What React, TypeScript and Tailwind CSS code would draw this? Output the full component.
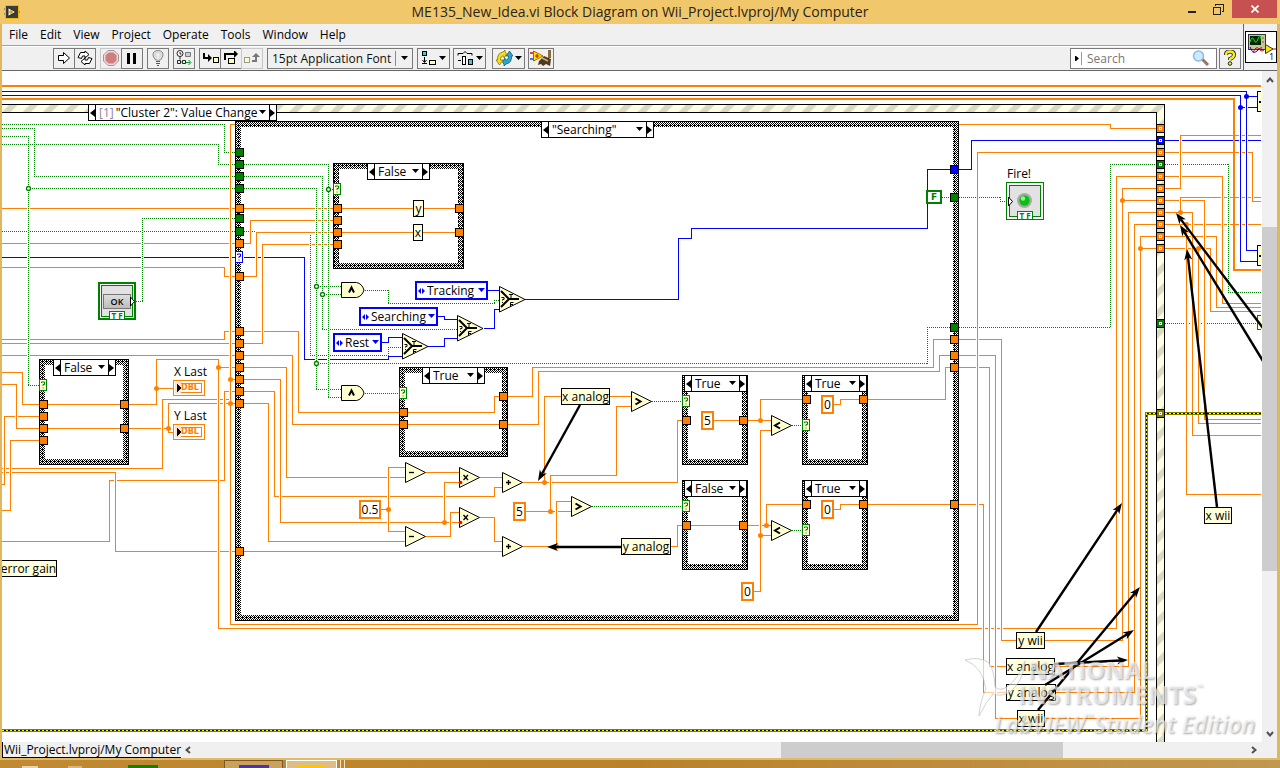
import React from "react";

const ORIGIN_X = 2;
const ORIGIN_Y = 71;
const at = (x: number, y: number) => ({ left: x - ORIGIN_X, top: y - ORIGIN_Y });
const box = (x: number, y: number, w: number, h: number) => ({ ...at(x, y), width: w, height: h });

const ORANGE = "#ff8000";
const GREEN = "#008000";
const BLUE = "#0000ff";
const CREAM = "#ffffd2";

/* Wires: colour key followed by the corner points of the path. */
type Kind = "o" | "g" | "b";
const WIRES: [Kind, number[]][] = [
  ["g", [2, 124, 224, 124, 224, 152, 236, 152]],
  ["g", [2, 128, 34, 128, 34, 176, 236, 176]],
  ["g", [2, 136, 28, 136, 28, 385, 39, 385]],
  ["g", [2, 144, 218, 144, 218, 164, 236, 164]],
  ["g", [28, 188, 236, 188]],
  ["o", [2, 208, 236, 208]],
  ["g", [134, 301, 142, 301, 142, 218, 236, 218]],
  ["g", [2, 231, 236, 231]],
  ["o", [2, 243, 236, 243]],
  ["b", [2, 257, 236, 257]],
  ["o", [2, 267, 224, 267, 224, 276, 236, 276]],
  ["o", [236, 124, 230, 124, 230, 624, 977, 624, 977, 152, 1157, 152]],
  ["o", [128, 404, 156, 404, 156, 359, 218, 359, 218, 628, 1116, 628, 1116, 176, 1157, 176]],
  ["o", [156, 388, 173, 388]],
  ["o", [218, 367, 236, 367]],
  ["o", [2, 339, 224, 339, 224, 331, 236, 331]],
  ["o", [2, 343, 236, 343]],
  ["o", [2, 355, 236, 355]],
  ["o", [230, 379, 236, 379]],
  ["o", [2, 541, 109, 541, 109, 480, 224, 480, 224, 391, 236, 391]],
  ["o", [236, 403, 168, 403, 168, 432, 173, 432]],
  ["o", [128, 428, 168, 428]],
  ["o", [2, 468, 162, 468, 162, 399, 230, 399]],
  ["o", [2, 472, 115, 472, 115, 551, 236, 551]],
  ["o", [2, 372, 22, 372, 22, 404, 40, 404]],
  ["o", [2, 384, 16, 384, 16, 428, 40, 428]],
  ["o", [2, 484, 4, 484, 4, 416, 40, 416]],
  ["o", [2, 510, 10, 510, 10, 440, 40, 440]],
  ["o", [46, 404, 122, 404]],
  ["o", [46, 428, 122, 428]],
  ["g", [244, 164, 328, 164, 328, 397, 341, 397]],
  ["g", [328, 189, 333, 189]],
  ["g", [244, 176, 322, 176, 322, 329, 457, 329]],
  ["g", [322, 294, 341, 294]],
  ["g", [244, 188, 316, 188, 316, 389, 341, 389]],
  ["g", [316, 286, 341, 286]],
  ["g", [316, 363, 927, 363, 927, 327, 949, 327]],
  ["g", [244, 231, 254, 231]],
  ["g", [310, 235, 310, 355, 388, 355, 388, 347, 402, 347]],
  ["o", [244, 208, 458, 208]],
  ["o", [244, 243, 250, 243, 250, 220, 333, 220]],
  ["o", [244, 276, 256, 276, 256, 232, 458, 232]],
  ["o", [333, 244, 262, 244, 262, 343, 244, 343]],
  ["o", [244, 331, 298, 331, 298, 412, 399, 412]],
  ["o", [244, 355, 292, 355, 292, 424, 399, 424]],
  ["o", [244, 367, 286, 367, 286, 477, 405, 477]],
  ["o", [244, 379, 280, 379, 280, 522, 459, 522]],
  ["o", [244, 391, 274, 391, 274, 496, 494, 496, 494, 487, 502, 487]],
  ["o", [244, 403, 268, 403, 268, 541, 405, 541]],
  ["o", [244, 551, 502, 551]],
  ["b", [244, 257, 304, 257, 304, 359, 388, 359, 388, 356, 402, 356]],
  ["g", [365, 290, 388, 290, 388, 303, 494, 303, 494, 300, 499, 300]],
  ["b", [488, 290, 499, 290]],
  ["b", [438, 316, 444, 316, 444, 319, 457, 319]],
  ["b", [382, 342, 388, 342, 388, 337, 402, 337]],
  ["b", [525, 299, 678, 299, 678, 238, 691, 238, 691, 228, 927, 228, 927, 169, 950, 169]],
  ["b", [484, 328, 494, 328, 494, 309, 499, 309]],
  ["b", [428, 346, 444, 346, 444, 338, 457, 338]],
  ["o", [408, 412, 494, 412, 494, 396, 499, 396]],
  ["o", [408, 424, 499, 424]],
  ["o", [508, 396, 532, 396, 532, 367, 933, 367, 933, 339, 949, 339]],
  ["o", [508, 424, 538, 424, 538, 371, 939, 371, 939, 355, 949, 355]],
  ["o", [867, 399, 945, 399, 945, 367, 949, 367]],
  ["g", [365, 393, 399, 393]],
  ["o", [426, 472, 459, 472]],
  ["o", [381, 509, 388, 509]],
  ["o", [405, 467, 388, 467, 388, 531, 405, 531]],
  ["o", [426, 536, 450, 536, 450, 512, 459, 512]],
  ["o", [480, 477, 502, 477]],
  ["o", [523, 482, 677, 482, 677, 420, 684, 420]],
  ["o", [444, 522, 444, 482, 459, 482]],
  ["o", [480, 517, 494, 517, 494, 541, 502, 541]],
  ["o", [523, 546, 556, 546, 556, 501, 571, 501]],
  ["o", [544, 482, 544, 396, 561, 396]],
  ["o", [610, 396, 631, 396]],
  ["o", [526, 511, 571, 511]],
  ["o", [550, 511, 550, 475, 616, 475, 616, 406, 631, 406]],
  ["g", [652, 401, 682, 401]],
  ["g", [592, 506, 682, 506]],
  ["o", [671, 546, 677, 546, 677, 525, 740, 525]],
  ["o", [714, 420, 740, 420]],
  ["o", [748, 420, 771, 420]],
  ["o", [760, 420, 760, 399, 804, 399]],
  ["o", [748, 525, 771, 525]],
  ["o", [766, 525, 766, 504, 804, 504]],
  ["o", [754, 591, 760, 591, 760, 430, 771, 430]],
  ["o", [760, 535, 771, 535]],
  ["g", [792, 425, 802, 425]],
  ["g", [792, 530, 802, 530]],
  ["o", [834, 404, 840, 404, 840, 399, 860, 399]],
  ["o", [834, 509, 840, 509, 840, 504, 950, 504]],
  ["o", [959, 124, 1110, 124, 1110, 128, 1157, 128]],
  ["b", [959, 169, 971, 169, 971, 140, 1260, 140]],
  ["g", [942, 197, 950, 197]],
  ["g", [959, 197, 1000, 197, 1000, 201, 1007, 201]],
  ["g", [959, 327, 1110, 327, 1110, 164, 1157, 164]],
  ["g", [1165, 164, 1228, 164, 1228, 292, 1260, 292]],
  ["o", [959, 339, 1001, 339, 1001, 640, 1122, 640, 1122, 188, 1157, 188]],
  ["o", [959, 355, 995, 355, 995, 718, 1140, 718, 1140, 236, 1157, 236]],
  ["o", [959, 367, 989, 367, 989, 666, 1128, 666, 1128, 212, 1157, 212]],
  ["o", [959, 504, 983, 504, 983, 692, 1134, 692, 1134, 224, 1157, 224]],
  ["o", [1122, 200, 1157, 200]],
  ["o", [1140, 248, 1157, 248]],
  ["o", [1165, 152, 1252, 152, 1252, 201, 1260, 201]],
  ["o", [1165, 176, 1222, 176, 1222, 303, 1260, 303]],
  ["o", [1165, 188, 1180, 188, 1180, 135, 1260, 135]],
  ["o", [1165, 200, 1204, 200, 1204, 419, 1260, 419]],
  ["o", [1165, 212, 1192, 212, 1192, 435, 1260, 435]],
  ["o", [1180, 212, 1180, 197, 1260, 197]],
  ["o", [1165, 224, 1260, 224]],
  ["o", [1186, 224, 1186, 494, 1260, 494]],
  ["o", [1165, 236, 1216, 236, 1216, 307, 1260, 307]],
  ["o", [1165, 248, 1210, 248, 1210, 311, 1260, 311]],
  ["o", [1198, 248, 1198, 423, 1260, 423]],
  ["g", [1165, 323, 1257, 323]],
  ["b", [2, 91, 1246, 91, 1246, 250, 1257, 250]],
  ["b", [2, 95, 1240, 95, 1240, 261, 1257, 261]],
  ["b", [1246, 96, 1257, 96]],
  ["b", [1240, 107, 1257, 107]],
];

const JOINTS: [Kind, number, number][] = [
  ["o", 218, 367], ["o", 230, 379], ["o", 230, 403], ["o", 156, 388], ["o", 168, 428],
  ["o", 388, 509], ["o", 444, 522], ["o", 544, 482], ["o", 550, 511], ["o", 556, 546],
  ["o", 760, 420], ["o", 766, 525], ["o", 760, 535], ["o", 1122, 200], ["o", 1140, 248],
  ["o", 1180, 212], ["o", 1186, 224], ["o", 1198, 248], ["b", 1246, 96], ["b", 1240, 107],
  ["g", 28, 188], ["g", 328, 189], ["g", 322, 294], ["g", 316, 286], ["g", 316, 363],
];

/* Case structures: x, y, width, height. */
const FRAMES = [
  [235, 121, 724, 500],
  [39, 359, 90, 106],
  [333, 163, 131, 106],
  [399, 367, 109, 90],
  [682, 375, 66, 90],
  [682, 480, 66, 90],
  [802, 375, 66, 90],
  [802, 480, 66, 90],
];

/* Tunnels: colour key, left edge, centre y. */
const TUNNELS: [Kind, number, number][] = [
  ["g", 235, 152], ["g", 235, 164], ["g", 235, 176], ["g", 235, 188], ["o", 235, 208],
  ["g", 235, 218], ["g", 235, 231], ["o", 235, 243], ["o", 235, 276], ["o", 235, 331],
  ["o", 235, 343], ["o", 235, 355], ["o", 235, 367], ["o", 235, 379], ["o", 235, 391],
  ["o", 235, 403], ["o", 235, 551],
  ["o", 39, 404], ["o", 39, 416], ["o", 39, 428], ["o", 39, 440], ["o", 120, 404], ["o", 120, 428],
  ["o", 333, 208], ["o", 333, 220], ["o", 333, 232], ["o", 333, 244], ["o", 455, 208], ["o", 455, 232],
  ["o", 399, 412], ["o", 399, 424], ["o", 499, 396], ["o", 499, 424],
  ["o", 682, 420], ["o", 739, 420], ["o", 682, 525], ["o", 739, 525],
  ["o", 802, 399], ["o", 859, 399], ["o", 802, 504], ["o", 859, 504],
  ["b", 950, 169], ["g", 950, 197], ["g", 950, 327], ["o", 950, 339], ["o", 950, 355],
  ["o", 950, 367], ["o", 950, 504],
];

const EVENT_TUNNELS: [string, number][] = [
  [ORANGE, 128], [BLUE, 140], [ORANGE, 152], [GREEN, 164], [ORANGE, 176], [ORANGE, 188],
  [ORANGE, 200], [ORANGE, 212], [ORANGE, 224], [ORANGE, 236], [ORANGE, 248], [GREEN, 323], ["#808000", 413],
];

const SELECTOR_TERMINALS = [
  [39, 379], [333, 183], [399, 387], [682, 395], [682, 500], [802, 419], [802, 524],
];

const FUNCTIONS: [string, number, number][] = [
  ["-", 405, 462], ["-", 405, 526], ["x", 459, 467], ["x", 459, 507], ["+", 502, 472],
  ["+", 502, 536], [">", 631, 391], [">", 571, 496], ["<", 771, 415], ["<", 771, 520],
];

const GLYPHS: Record<string, string> = {
  "-": "M4 10.500h5",
  "+": "M4 10.500h5M6.500 8v5",
  x: "M4.500 8l4.500 5M9 8l-4.500 5",
  ">": "M4.500 7.500l5 3l-5 3",
  "<": "M9 7.500l-5 3l5 3",
};

const ARROWS = [
  [580, 405, 538, 481],
  [621, 547, 547, 547],
  [1036, 632, 1122, 503],
  [1038, 710, 1140, 587],
  [1045, 685, 1134, 630],
  [1055, 664, 1128, 660],
  [1217, 507, 1187, 249],
  [1263, 328, 1176, 213],
  [1263, 361, 1180, 225],
];

const colour = (k: Kind) => (k === "o" ? ORANGE : k === "g" ? GREEN : BLUE);

function segments(vertical: boolean) {
  const out: { k: Kind; x: number; y: number; len: number }[] = [];
  for (const [k, p] of WIRES) {
    for (let i = 0; i + 3 < p.length; i += 2) {
      const [x1, y1, x2, y2] = p.slice(i, i + 4);
      const isVertical = x1 === x2;
      if (isVertical !== vertical) continue;
      out.push({ k, x: Math.min(x1, x2), y: Math.min(y1, y2), len: Math.abs(isVertical ? y2 - y1 : x2 - x1) + 1 });
    }
  }
  return out;
}

function Wires() {
  return (
    <g shapeRendering="crispEdges">
      {segments(false).map((s, i) => (
        <line key={i} x1={s.x} x2={s.x + s.len} y1={s.y + 0.5} y2={s.y + 0.5} stroke={colour(s.k)} strokeDasharray={s.k === "g" ? "1 1" : undefined} />
      ))}
      {segments(true).map((s, i) => (
        <g key={i}>
          {s.len > 6 && <rect x={s.x - 1} y={s.y + 2} width={3} height={s.len - 4} fill="#fff" />}
          <line x1={s.x + 0.5} x2={s.x + 0.5} y1={s.y} y2={s.y + s.len} stroke={colour(s.k)} strokeDasharray={s.k === "g" ? "1 1" : undefined} />
        </g>
      ))}
    </g>
  );
}

function Diagram() {
  return (
    <svg className="absolute left-0 top-0" width={1260} height={671} viewBox="2 71 1260 671" aria-hidden="true">
      <defs>
        <pattern id="hatch" width="4" height="4" patternUnits="userSpaceOnUse">
          <rect width="4" height="4" fill="#fff" />
          <path d="M0 0h1v1h-1zM2 0h1v1h-1zM1 1h3v1h-3zM0 2h1v1h-1zM2 2h1v1h-1zM1 3h1v1h-1zM3 3h1v1h-1z" fill="#000" />
        </pattern>
        <pattern id="stripe" x="15.800" width="20.500" height="20.500" patternUnits="userSpaceOnUse">
          <rect width="20.500" height="20.500" fill="#ffffe3" />
          <path d="M-5 25.500L25.500 -5M-5 5L5 -5M15.500 25.500L25.500 15.500" stroke="#dadac4" strokeWidth="6" />
        </pattern>
      </defs>

      <Wires />

      <g fill="none" stroke={ORANGE} strokeWidth="2" shapeRendering="crispEdges">
        <path d="M2 86H1261" />
        <path d="M2 99H1234V270H1261" />
      </g>

      <g fill="none" shapeRendering="crispEdges">
        <path d="M1261 413.500H1146.500V730.500H2" stroke="#808000" strokeWidth="3" />
        <path d="M1261 413.500H1146.500V730.500H2" stroke="#ffff00" />
        <path d="M1261 413.500H1146.500V730.500H2" stroke="#000" strokeDasharray="2 2" />
      </g>

      <path d="M0 104.500H1164.500V745H1156.500V112.500H0Z" fill="url(#stripe)" stroke="#000" shapeRendering="crispEdges" />

      {FRAMES.map(([x, y, w, h], i) => (
        <g key={i} shapeRendering="crispEdges">
          <path fillRule="evenodd" fill="url(#hatch)" d={`M${x} ${y}h${w}v${h}h${-w}zM${x + 6} ${y + 6}v${h - 12}h${w - 12}v${-(h - 12)}z`} />
          <rect x={x + 0.5} y={y + 0.5} width={w - 1} height={h - 1} fill="none" stroke="#000" />
        </g>
      ))}

      {TUNNELS.map(([k, x, y], i) => (
        <rect key={i} x={x + 0.5} y={y - 3.5} width={8} height={8} fill={colour(k)} stroke="#000" shapeRendering="crispEdges" />
      ))}
      {EVENT_TUNNELS.map(([c, y], i) => (
        <g key={i} shapeRendering="crispEdges">
          <rect x={1156.5} y={y - 3.5} width={8} height={8} fill={c} stroke="#000" />
          <rect x={1159} y={y - 1} width={3} height={3} fill="#fff" />
          <rect x={1160} y={y} width={1} height={1} fill={c} />
        </g>
      ))}

      {JOINTS.map(([k, x, y], i) =>
        k === "g" ? (
          <circle key={i} cx={x + 0.5} cy={y + 0.5} r={2} fill="#fff" stroke={GREEN} strokeWidth="1.300" />
        ) : (
          <circle key={i} cx={x + 0.5} cy={y + 0.5} r={2.5} fill={colour(k)} />
        )
      )}

      {SELECTOR_TERMINALS.map(([x, y], i) => (
        <g key={i} transform={`translate(${x} ${y})`}>
          <rect x=".5" y=".5" width="7" height="11" fill={CREAM} stroke={GREEN} />
          <path d="M2.500 4V3h3v2.500h-1.500v1.500M4 8.500v1" fill="none" stroke={GREEN} />
        </g>
      ))}
      <g transform="translate(235 251)">
        <rect x=".5" y=".5" width="7" height="11" fill="#fff" stroke={BLUE} />
        <path d="M2.500 4V3h3v2.500h-1.500v1.500M4 8.500v1" fill="none" stroke={BLUE} />
      </g>

      {FUNCTIONS.map(([op, x, y], i) => (
        <g key={i} transform={`translate(${x} ${y})`}>
          <path d="M.5 .5L20.500 10.500L.5 20.500Z" fill={CREAM} stroke="#000" />
          <path d={GLYPHS[op]} fill="none" stroke="#000" strokeWidth={op === ">" || op === "<" ? 2 : 1.3} />
          {op === "x" && <circle cx="1.500" cy="15.500" r="1.800" fill="#ff0000" />}
        </g>
      ))}

      {[[341, 282], [341, 385]].map(([x, y], i) => (
        <g key={i} transform={`translate(${x} ${y})`}>
          <path d="M.5 .5H15.500Q21 1.500 23 8Q21 14.500 15.500 15.500H.5Z" fill={CREAM} stroke="#000" />
          <path d="M8 10.500L10.500 5.500L13 10.500" fill="none" stroke="#000" strokeWidth="2" />
        </g>
      ))}

      {[[499, 286], [457, 315], [402, 333]].map(([x, y], i) => (
        <g key={i} transform={`translate(${x} ${y})`}>
          <path d="M.5 .5L26 13.500L.5 26Z" fill={CREAM} stroke="#000" />
          <path d="M2 5L10 13M2 21L10 13M10 13H20" fill="none" stroke="#000" strokeWidth="2" />
          <path d="M2.500 11.500h2.500v2h-1.500v1M3.500 16v1M10 8.500h4M12 8.500v4M11.500 21v-4.500h3M11.500 18.500h2.500" fill="none" stroke="#000" />
        </g>
      ))}

      {[[173, 380], [173, 424]].map(([x, y], i) => (
        <g key={i} transform={`translate(${x} ${y})`} shapeRendering="crispEdges">
          <rect x=".5" y=".5" width="31" height="15" fill="#fff" stroke={ORANGE} />
          <rect x="3.500" y="3.500" width="25" height="9" fill="#fff" stroke={ORANGE} />
          <rect x="2" y="2" width="6" height="12" fill="#ffe4cc" />
          <path d="M4 4v8l4-4z" fill="#000" />
        </g>
      ))}

      <g shapeRendering="crispEdges">
        <rect x="1257.500" y="91.500" width="6" height="20" fill={CREAM} stroke="#000" />
        <rect x="1259" y="101" width="2" height="2" fill="#000" />
        <rect x="1257.500" y="245.500" width="6" height="20" fill={CREAM} stroke="#000" />
        <rect x="1259" y="255" width="2" height="2" fill="#000" />
        <rect x="1257.500" y="315.500" width="6" height="14" fill={CREAM} stroke={GREEN} />
      </g>

      <g transform="translate(1006 182)">
        <rect x=".5" y=".5" width="37" height="37" fill="#fff" stroke={GREEN} />
        <rect x="3.500" y="3.500" width="31" height="31" fill="#e2e2e2" stroke={GREEN} />
        <circle cx="18.500" cy="18.500" r="7.500" fill="#a9a9a9" />
        <circle cx="18.500" cy="18.500" r="5.200" fill="#0bbf12" />
        <circle cx="17" cy="16.500" r="2.200" fill="#8df58c" />
        <path d="M2.500 15l4 4.500l-4 4.500z" fill="#fff" stroke="#000" />
      </g>
      <path d="M1261.500 71V742" stroke="#fff" />
    </svg>
  );
}

function CaseSelector({ x, y, w, value, index, label }: { x: number; y: number; w: number; value: string; index?: string; label: string }) {
  return (
    <div className="absolute flex h-[17px] items-stretch border border-black bg-white" style={{ ...at(x, y), width: w }}>
      <button aria-label={`Previous case of ${label}`} className="flex w-[7px] shrink-0 items-center justify-center border-r border-black">
        <svg width="6" height="8" viewBox="0 0 6 8" className="shrink-0"><path d="M6 0v8L1 4z" /></svg>
      </button>
      <div className="relative flex min-w-0 flex-1 items-center pl-[3px]">
        {index && <span className="pr-[2px] text-[#8c8494]">{index}</span>}
        <select aria-label={label} defaultValue={value} className="h-[15px] min-w-0 flex-1 appearance-none bg-transparent p-0 leading-[15px] text-black outline-none">
          <option>{value}</option>
        </select>
        <svg className="pointer-events-none absolute right-[3px] top-[5px]" width="7" height="4" viewBox="0 0 7 4"><path d="M0 0h7L3.500 4z" /></svg>
      </div>
      <button aria-label={`Next case of ${label}`} className="flex w-[7px] shrink-0 items-center justify-center border-l border-black">
        <svg width="6" height="8" viewBox="0 0 6 8" className="shrink-0"><path d="M0 0v8L5 4z" /></svg>
      </button>
    </div>
  );
}

function EnumConstant({ x, y, w, value }: { x: number; y: number; w: number; value: string }) {
  return (
    <div className="absolute flex h-[19px] items-center gap-[2px] border-2 border-[#0000ff] bg-white pl-px" style={{ ...at(x, y), width: w }}>
      <svg className="shrink-0" width="7" height="6" viewBox="0 0 7 6" fill="#0000ff"><path d="M3 0v6L0 3zM4 0v6L7 3z" /></svg>
      <select aria-label={`${value} state`} defaultValue={value} className="h-[15px] min-w-0 flex-1 appearance-none bg-transparent p-0 leading-[15px] text-black outline-none">
        <option>{value}</option>
      </select>
      <svg className="pointer-events-none absolute right-px top-[5px]" width="7" height="4" viewBox="0 0 7 4" fill="#0000ff"><path d="M0 0h7L3.500 4z" /></svg>
    </div>
  );
}

function NumberConstant({ x, y, w, value }: { x: number; y: number; w: number; value: string }) {
  return (
    <input
      aria-label={`Constant ${value}`}
      defaultValue={value}
      className="absolute h-[19px] border-2 border-[#ff8000] bg-white p-0 text-center leading-[15px] text-black outline-none"
      style={{ ...at(x, y), width: w }}
    />
  );
}

function Note({ x, y, w, text }: { x: number; y: number; w: number; text: string }) {
  return (
    <div className="absolute flex h-[17px] items-center justify-center whitespace-nowrap border border-black bg-[#ffffd9]" style={{ ...at(x, y), width: w }}>
      {text}
    </div>
  );
}

function BooleanTag({ x, y }: { x: number; y: number }) {
  return (
    <div className="absolute flex items-center justify-center gap-[2px] border border-b-0 border-[#008000] bg-white text-[8px] leading-[8px] font-bold text-[#008000]" style={box(x, y, 16, 8)}>
      <span>T</span>
      <span>F</span>
    </div>
  );
}

function Overlay() {
  return (
    <svg className="pointer-events-none absolute left-0 top-0" width={1260} height={671} viewBox="2 71 1260 671" aria-hidden="true">
      {ARROWS.map(([x1, y1, x2, y2], i) => {
        const a = (Math.atan2(y2 - y1, x2 - x1) * 180) / Math.PI;
        const len = Math.hypot(x2 - x1, y2 - y1);
        return (
          <g key={i} transform={`translate(${x2} ${y2}) rotate(${a})`}>
            <path d={`M${-len} 0H-8`} stroke="#000" strokeWidth="2.400" />
            <path d="M0 0L-11 -4L-8 0L-11 4Z" fill="#000" />
          </g>
        );
      })}
    </svg>
  );
}

function Watermark() {
  return (
    <div className="pointer-events-none absolute left-[962px] top-[584px] h-[87px] w-[298px] text-white/60 [text-shadow:1px_1px_2px_rgba(90,90,90,0.5)]">
      <svg className="absolute left-0 top-0" width="64" height="64" viewBox="0 0 64 64" aria-hidden="true">
        <path d="M1 5Q16 1 25 8Q30 14 31 32Q36 37 44 31Q54 24 61 6Q59 27 46 37Q38 42 29 39Q22 47 15 61Q16 46 22 34Q19 12 1 5Z" fill="#fff" fillOpacity=".6" stroke="#b5b5b5" strokeOpacity=".6" />
      </svg>
      <div className="absolute left-[64px] top-[2px] text-[24px] leading-[26px] font-bold">NATIONAL</div>
      <div className="absolute left-[54px] top-[26px] flex text-[25px] leading-[26px] font-bold">
        INSTRUMENTS<span className="text-[8px] leading-[12px]">™</span>
      </div>
      <div className="absolute left-[30px] top-[54px] flex whitespace-nowrap text-[23px] leading-[30px] font-semibold italic">
        LabVIEW<span className="text-[12px] leading-[18px]">™</span>
        <span>Student Edition</span>
      </div>
    </div>
  );
}

function ToolButton({ label, className, children, disabled }: { label: string; className: string; children: React.ReactNode; disabled?: boolean }) {
  return (
    <button aria-label={label} disabled={disabled} className={`flex h-[21px] shrink-0 items-center justify-center border bg-[#f0f0f0] ${disabled ? "border-[#c8c8c8]" : "border-[#7a7a7a]"} ${className}`}>
      {children}
    </button>
  );
}

const Caret = () => (
  <svg width="7" height="4" viewBox="0 0 7 4"><path d="M0 0h7L3.500 4z" /></svg>
);

function Toolbar() {
  return (
    <div className="flex h-[25px] items-center border-t border-white pl-[51px] pr-[2px]">
      <ToolButton label="Run" className="w-[22px]">
        <svg width="14" height="14" viewBox="0 0 14 14" fill="#fff" stroke="#000"><path d="M1.500 4.500h5v-3l6 5.500l-6 5.500v-3h-5z" /></svg>
      </ToolButton>
      <ToolButton label="Run continuously" className="-ml-px w-[22px]">
        <svg width="16" height="14" viewBox="0 0 16 14" fill="#fff" stroke="#000"><path d="M1 6.500L3.500 1.500H8V0L12 3.500L8 7V5H5.500L4.500 7.500zM15 7.500L12.500 12.500H8V14L4 10.500L8 7V9H10.500L11.500 6.500z" /></svg>
      </ToolButton>
      <ToolButton label="Abort" className="ml-1 w-[22px]" disabled>
        <svg width="16" height="16" viewBox="0 0 16 16"><path d="M5 .5h6L15.500 5v6L11 15.500H5L.5 11V5z" fill="#f0d8d8" stroke="#999" /><path d="M5.500 2.500h5l3 3v5l-3 3h-5l-3-3v-5z" fill="#cf7d7d" /></svg>
      </ToolButton>
      <ToolButton label="Pause" className="-ml-px w-[22px]">
        <svg width="10" height="11" viewBox="0 0 10 11"><path d="M0 0h3v11H0zM6 0h3v11H6z" /></svg>
      </ToolButton>
      <ToolButton label="Highlight execution" className="ml-1 w-[22px]">
        <svg width="12" height="16" viewBox="0 0 12 16" stroke="#8a8a8a" fill="#dcdcdc"><path d="M6 .5q5 0 5 4.500q0 2-2.500 5h-5q-2.500-3-2.500-5q0-4.500 5-4.500z" /><path d="M4 11.500h4M4 13.500h4M5 15.500h2" stroke="#555" /><path d="M6 10V5L4.500 4M6 5l1.500-1" fill="none" stroke="#fff" /></svg>
      </ToolButton>
      <ToolButton label="Retain wire values" className="ml-1 w-[22px]">
        <svg width="16" height="16" viewBox="0 0 16 16" fill="none" stroke="#222"><circle cx="4" cy="3.500" r="3" fill="#fff" /><path d="M4 2v2h1.500M4 6.500v3" /><path d="M9.500 2.500h5v4h-5z" fill="#ccc" stroke="#777" /><path d="M1.500 10.500h3v3h-3zM6.500 10.500h3v3h-3z" /><path d="M5 12h1.500M10 12.500h4M12.500 10l2.500 2.500l-2.500 2.500" stroke="#00a020" /></svg>
      </ToolButton>
      <ToolButton label="Step into" className="ml-1 w-[22px]">
        <svg width="17" height="12" viewBox="0 0 17 12"><path d="M2 1v5H7" fill="none" stroke="#000" strokeWidth="2" /><path d="M6 2L10 6L6 10z" /><rect x="11.500" y="5.500" width="5" height="5" fill="#ffffb0" stroke="#000" /></svg>
      </ToolButton>
      <ToolButton label="Step over" className="-ml-px w-[22px]">
        <svg width="16" height="14" viewBox="0 0 16 14"><path d="M2 9V3H12" fill="none" stroke="#000" strokeWidth="2" /><path d="M11 -1L15 3L11 7z" /><rect x="5.500" y="7.500" width="6" height="5" fill="#ffffb0" stroke="#000" /></svg>
      </ToolButton>
      <ToolButton label="Step out" className="-ml-px w-[22px]" disabled>
        <svg width="16" height="12" viewBox="0 0 16 12"><rect x=".5" y="5.500" width="5" height="5" fill="#ffffb0" stroke="#999" /><path d="M8 9h4V4" fill="none" stroke="#777" strokeWidth="2" /><path d="M8 5L12 1L16 5z" fill="#777" /></svg>
      </ToolButton>
      <button className="ml-1 flex h-[21px] w-[146px] shrink-0 items-center border border-[#7a7a7a] bg-[#f0f0f0] pl-1 text-[#111]">
        <span className="flex-1 whitespace-nowrap text-left">15pt Application Font</span>
        <span className="flex h-[15px] w-[17px] items-center justify-center border-l border-[#8a8a8a]"><Caret /></span>
      </button>
      <ToolButton label="Align objects" className="ml-1 w-[33px] gap-[2px]">
        <svg width="16" height="14" viewBox="0 0 16 14"><rect x="1.500" y=".5" width="4" height="4" fill="#3cc8e8" stroke="#000" /><path d="M3.500 6v5M1 12.500h5M1.500 9l2 2.500l2-2.500" stroke="#000" fill="none" /><rect x="8.500" y="9.500" width="6" height="4" fill="#ffffb0" stroke="#000" /></svg>
        <Caret />
      </ToolButton>
      <ToolButton label="Distribute objects" className="ml-[3px] w-[33px] gap-[2px]">
        <svg width="17" height="14" viewBox="0 0 17 14"><path d="M1 4.500V2.500h5l2-2l2 2h5v2M1 9.500h3" stroke="#000" fill="none" /><rect x="5.500" y="5.500" width="3" height="8" fill="#fff" stroke="#000" /><rect x="11.500" y="8.500" width="4" height="5" fill="#3cc8e8" stroke="#000" /></svg>
        <Caret />
      </ToolButton>
      <ToolButton label="Reorder" className="ml-[6px] w-[33px] gap-[2px]">
        <svg width="17" height="16" viewBox="0 0 17 16" strokeWidth=".7">
          <path d="M9 0V2Q11 3 10 5L8 8V6Q4 6 4.500 10H7L3.500 15L0 10H1.500Q1 3 7 2Z" fill="#f2df1c" stroke="#776600" />
          <path d="M8 16V14Q6 13 7 11L9 8V10Q13 10 12.500 6H10L13.500 1L17 6H15.500Q16 13 10 14Z" fill="#29a9cc" stroke="#0d4c60" />
        </svg>
        <Caret />
      </ToolButton>
      <ToolButton label="Clean up diagram" className="ml-[3px] w-[26px]">
        <svg width="22" height="17" viewBox="0 0 22 17"><path d="M0 3h3" stroke="#e00000" strokeWidth="1.500" /><path d="M0 9h3" stroke="#2040e0" strokeWidth="1.500" /><path d="M3.500 1L13 6L3.500 11z" fill="#ffe600" stroke="#a06a00" /><path d="M5 6h4M7 4v4" stroke="#c00" /><path d="M18 0h3v8h-3z" fill="#8a6a40" /><path d="M14 6L21 9L20 16L16 14L13 16L11 14L8 15L9 11Z" fill="#4f3a20" /><path d="M12 8l6 3" stroke="#c9b080" strokeWidth="1.500" /></svg>
      </ToolButton>
      <div className="flex-1" />
      <div className="flex h-[21px] w-[147px] items-center border border-[#7a7a7a] bg-white">
        <svg className="ml-1 shrink-0" width="5" height="7" viewBox="0 0 5 7"><path d="M0 1h1v5H0zM1 1l3 2.500L1 6z" /></svg>
        <input aria-label="Search" placeholder="Search" className="ml-px h-[13px] min-w-0 flex-1 border-l border-[#999] pl-[5px] leading-[13px] text-[#555] outline-none placeholder:text-[#777]" />
        <svg className="mr-[6px] shrink-0" width="18" height="17" viewBox="0 0 18 17"><path d="M10 9l6 6" stroke="#a07060" strokeWidth="3" /><circle cx="6.500" cy="6" r="5" fill="#cdeaff" stroke="#8abbe2" strokeWidth="1.500" /></svg>
      </div>
      <ToolButton label="Show context help" className="ml-[2px] w-[22px]">
        <svg width="12" height="16" viewBox="0 0 12 16"><path d="M2 5q0-3.500 4-3.500t4 3.500q0 2-4 4v1" fill="none" stroke="#222" strokeWidth="4" /><path d="M2 5q0-3.500 4-3.500t4 3.500q0 2-4 4v1" fill="none" stroke="#f5ee20" strokeWidth="2.400" /><circle cx="6" cy="13.500" r="1.800" fill="#f5ee20" stroke="#222" /></svg>
      </ToolButton>
    </div>
  );
}

const MENU = ["File", "Edit", "View", "Project", "Operate", "Tools", "Window", "Help"];

export default function App() {
  return (
    <div className="flex h-screen flex-col overflow-hidden bg-[#f0c76b] font-['Open_Sans','Noto_Sans',sans-serif] text-[12px] leading-[15px] text-black">
      <header className="relative flex h-6 shrink-0 items-center justify-center">
        <svg className="absolute left-1 top-1" width="16" height="16" viewBox="0 0 16 16" aria-hidden="true">
          <path d="M0 5h2M0 10h2M14 8h2" stroke="#335a70" />
          <rect x="1.500" y="1.500" width="13" height="13" fill="#3c3c3c" stroke="#f0b800" />
          <path d="M4 3.500L12 8L4 12.500z" fill="#fff3c4" stroke="#222" />
          <path d="M5 8h4M7 6v4" stroke="#c08000" />
        </svg>
        <h1 className="whitespace-nowrap text-[14px] leading-[24px] text-[#2b2417]">ME135_New_Idea.vi Block Diagram on Wii_Project.lvproj/My Computer</h1>
        <div className="absolute right-[3px] top-0 flex h-[18px]">
          <button aria-label="Minimize" className="flex w-[24px] items-center justify-center"><svg width="8" height="12" viewBox="0 0 8 12"><path d="M0 8h8v2H0z" fill="#222" /></svg></button>
          <button aria-label="Restore" className="flex w-[28px] items-center justify-center"><svg width="11" height="11" viewBox="0 0 11 11" fill="none" stroke="#222" shapeRendering="crispEdges"><path d="M2.500 2V.5h8v7H9M.5 3h7v7.500h-7zM.5 3.500h7" /></svg></button>
          <button aria-label="Close" className="flex w-[45px] items-center justify-center bg-[#c75050]"><svg width="8" height="8" viewBox="0 0 8 8"><path d="M.5 .5l7 7M7.500 .5l-7 7" stroke="#fff" strokeWidth="1.700" /></svg></button>
        </div>
      </header>

      <div className="flex min-h-0 flex-1 flex-col border-l-2 border-r-[3px] border-[#e0b661]">
        <div className="flex h-[47px] shrink-0 border-b border-[#666] bg-[#f0f0f0]">
          <div className="flex min-w-0 flex-1 flex-col">
            <nav className="flex h-[22px] items-center gap-[12px] border-b border-[#a0a0a0] pl-[7px]">
              {MENU.map((m) => (
                <button key={m}>{m}</button>
              ))}
            </nav>
            <Toolbar />
          </div>
          <div className="flex w-[34px] items-start justify-center border-l border-[#666] pt-[7px]">
            <svg width="32" height="32" viewBox="0 0 32 32" aria-label="VI icon">
              <rect x=".5" y=".5" width="31" height="31" fill="#fff" stroke="#000" />
              <rect x="3.500" y="3.500" width="17" height="15" fill="#c8c4a0" stroke="#333" />
              <rect x="5" y="5" width="11" height="9" fill="#002800" />
              <path d="M5 11q2-7 4-2t4-1t3 0" fill="none" stroke="#20e020" />
              <path d="M18 6v2M18 10v2" stroke="#806020" />
              <path d="M5 16q3 8 7 4t5-3" fill="none" stroke="#0000c0" />
              <path d="M8 22q3-8 6-4t6 0M27 18h4" fill="none" stroke="#e00000" />
              <path d="M20.500 13.500L28 18L20.500 22.500z" fill="#ffe600" stroke="#333" />
              <text x="24" y="29" fontSize="9" fontFamily="Open Sans">1</text>
            </svg>
          </div>
        </div>

        <div className="flex min-h-0 flex-1">
          <main className="relative min-w-0 flex-1 overflow-hidden bg-white">
            <Diagram />
            <CaseSelector x={88} y={104} w={189} index="[1]" value={'"Cluster 2": Value Change'} label="Event case" />
            <CaseSelector x={541} y={121} w={113} value={'"Searching"'} label="State case" />
            <CaseSelector x={53} y={359} w={63} value="False" label="Last value case" />
            <CaseSelector x={367} y={163} w={63} value="False" label="Hold position case" />
            <CaseSelector x={422} y={367} w={63} value="True" label="Error case" />
            <CaseSelector x={684} y={375} w={63} value="True" label="X upper limit case" />
            <CaseSelector x={684} y={480} w={63} value="False" label="Y upper limit case" />
            <CaseSelector x={804} y={375} w={63} value="True" label="X lower limit case" />
            <CaseSelector x={804} y={480} w={63} value="True" label="Y lower limit case" />
            <EnumConstant x={415} y={281} w={73} value="Tracking" />
            <EnumConstant x={359} y={307} w={79} value="Searching" />
            <EnumConstant x={333} y={333} w={49} value="Rest" />
            <NumberConstant x={359} y={500} w={22} value="0.5" />
            <NumberConstant x={513} y={502} w={13} value="5" />
            <NumberConstant x={701} y={411} w={13} value="5" />
            <NumberConstant x={821} y={395} w={13} value="0" />
            <NumberConstant x={821} y={500} w={13} value="0" />
            <NumberConstant x={741} y={582} w={13} value="0" />
            <Note x={413} y={200} w={11} text="y" />
            <Note x={413} y={224} w={10} text="x" />
            <Note x={561} y={388} w={49} text="x analog" />
            <Note x={621} y={538} w={50} text="y analog" />
            <Note x={1016} y={632} w={29} text="y wii" />
            <Note x={1006} y={658} w={49} text="x analog" />
            <Note x={1006} y={684} w={50} text="y analog" />
            <Note x={1017} y={710} w={28} text="x wii" />
            <Note x={1204} y={507} w={28} text="x wii" />
            <Note x={0} y={560} w={57} text="error gain" />
            <div className="absolute whitespace-nowrap" style={at(174, 364)}>X Last</div>
            <div className="absolute whitespace-nowrap" style={at(174, 408)}>Y Last</div>
            <div className="absolute whitespace-nowrap" style={at(1007, 166)}>Fire!</div>
            <div className="absolute font-['DejaVu_Sans',sans-serif] text-[8px] leading-[8px] font-bold text-[#ff8000]" style={at(181, 384)}>DBL</div>
            <div className="absolute font-['DejaVu_Sans',sans-serif] text-[8px] leading-[8px] font-bold text-[#ff8000]" style={at(181, 428)}>DBL</div>
            <BooleanTag x={1017} y={211} />
            <div className="absolute flex items-center justify-center border-2 border-[#008000] bg-white font-['DejaVu_Sans',sans-serif] text-[9px] leading-[9px] font-bold text-[#008000]" style={box(926, 190, 16, 14)}>F</div>
            <div className="absolute border-2 border-[#008000] bg-white p-px" style={box(98, 282, 38, 38)}>
              <div className="flex h-full items-center border border-[#008000] bg-[#e2e2e2] px-px">
                <button className="h-[15px] w-full border border-[#777] bg-gradient-to-b from-[#dedede] to-[#bdbdbd] text-[9px] leading-[13px] font-semibold">OK</button>
              </div>
            </div>
            <BooleanTag x={109} y={311} />
            <svg className="absolute" style={at(130, 296)} width="6" height="11" viewBox="0 0 6 11"><path d="M.5 1l4 4.500l-4 4.500z" fill="#fff" stroke="#000" /></svg>
            <Overlay />
            <Watermark />
          </main>

          <div className="flex w-[15px] shrink-0 flex-col bg-[#f0f0f0]">
            <button aria-label="Scroll up" className="flex h-[17px] items-center justify-center"><svg width="8" height="6" viewBox="0 0 8 6"><path d="M1 5l3-3.500L7 5" fill="none" stroke="#505050" strokeWidth="2" /></svg></button>
            <div className="flex-[139]" />
            <div className="flex-[344] bg-[#cdcdcd]" />
            <div className="flex-[154]" />
            <button aria-label="Scroll down" className="flex h-[17px] items-center justify-center"><svg width="8" height="6" viewBox="0 0 8 6"><path d="M1 1l3 3.500L7 1" fill="none" stroke="#505050" strokeWidth="2" /></svg></button>
          </div>
        </div>

        <div className="flex h-4 shrink-0 bg-[#f0f0f0]">
          <div className="-mt-px flex w-[179px] items-center whitespace-nowrap border border-r-0 border-black bg-[#f0f0f0] pl-px">Wii_Project.lvproj/My Computer</div>
          <button aria-label="Scroll left" className="flex w-[13px] items-center justify-center"><svg width="6" height="8" viewBox="0 0 6 8"><path d="M5 1L1.500 4L5 7" fill="none" stroke="#505050" strokeWidth="2" /></svg></button>
          <div className="flex-[587]" />
          <div className="flex-[282] bg-[#cdcdcd]" />
          <div className="flex-[182]" />
          <button aria-label="Scroll right" className="flex w-[17px] items-center justify-center"><svg width="6" height="8" viewBox="0 0 6 8"><path d="M1 1l3.500 3L1 7" fill="none" stroke="#505050" strokeWidth="2" /></svg></button>
          <div className="w-[15px]" />
        </div>
      </div>

      <footer className="flex h-[10px] shrink-0 items-end border-t-2 border-[#e3b964] bg-gradient-to-r from-[#c08a34] via-[#b9822a] to-[#c09850]">
        <div className="ml-[22px] h-[2px] w-[16px] bg-[#e6d3a8]" />
        <div className="ml-[30px] h-[2px] w-[14px] bg-[#d8b878]" />
        <div className="ml-[46px] h-[3px] w-[30px] bg-[#008a00]" />
        <div className="ml-[66px] flex h-[8px] w-[59px] items-end justify-center border border-b-0 border-[#7d5a22] bg-[#c9a260]"><div className="h-[3px] w-[30px] bg-[#4a35b0]" /></div>
        <div className="ml-[3px] flex h-[8px] w-[51px] items-end justify-center border border-b-0 border-white bg-[#dcbd85]"><div className="h-[2px] w-[28px] bg-[#ffc400]" /></div>
        <div className="h-[8px] w-1 border-r border-[#f3e3c0]" />
        <div className="h-[8px] w-1 border-r border-[#f3e3c0]" />
      </footer>
    </div>
  );
}
